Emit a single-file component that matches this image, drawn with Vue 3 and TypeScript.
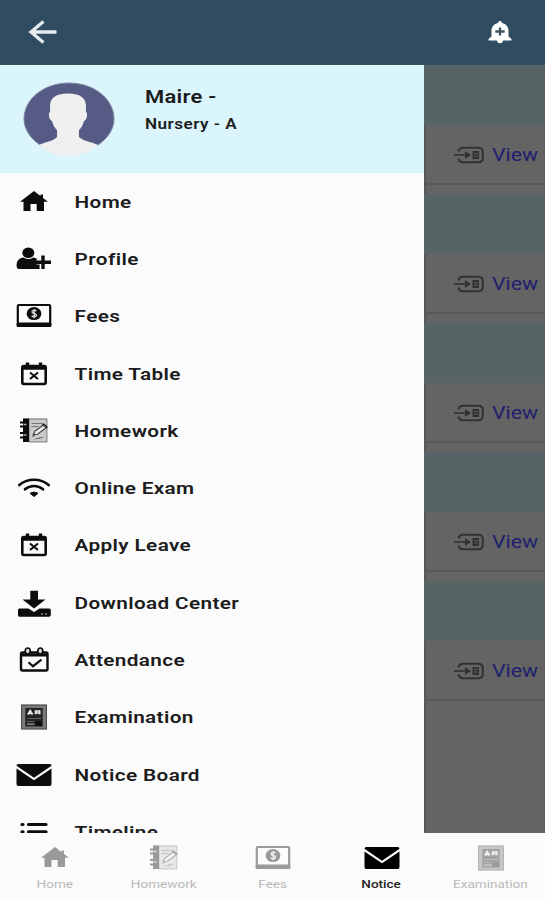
<script setup lang="ts">
interface Entry {
  label: string
  icon: string
}

const menu: Entry[] = [
  { label: 'Home', icon: 'home' },
  { label: 'Profile', icon: 'profile' },
  { label: 'Fees', icon: 'fees' },
  { label: 'Time Table', icon: 'calendar-x' },
  { label: 'Homework', icon: 'homework' },
  { label: 'Online Exam', icon: 'wifi' },
  { label: 'Apply Leave', icon: 'calendar-x' },
  { label: 'Download Center', icon: 'download' },
  { label: 'Attendance', icon: 'calendar-check' },
  { label: 'Examination', icon: 'exam' },
  { label: 'Notice Board', icon: 'mail' },
  { label: 'Timeline', icon: 'list' },
]

const tabs: Entry[] = [
  { label: 'Home', icon: 'home' },
  { label: 'Homework', icon: 'homework' },
  { label: 'Fees', icon: 'fees' },
  { label: 'Notice', icon: 'mail' },
  { label: 'Examination', icon: 'exam' },
]

const activeTab = 'Notice'
</script>

<template>
  <div class="screen">
    <svg class="sprite" aria-hidden="true">
      <symbol id="home" viewBox="0 0 36 30">
        <path d="M18 4 4 14.800h3.500V24h7v-7h6.200v7H28v-9.200h4L27 10.900V7.500h-2.500v1.500z" fill="currentColor" />
      </symbol>
      <symbol id="profile" viewBox="0 0 36 30">
        <ellipse cx="12.300" cy="8.800" rx="6" ry="5.300" fill="currentColor" />
        <path d="M.6 21c0-4.500 3-7.300 7-7.600 3 2 6.500 2 9.500 0 2 .2 3.500 1 4.500 2h-1.200v5.200h3.200V25H3C1.300 25 .6 23.500.6 21z" fill="currentColor" />
        <path d="M27 11.500V25M20 18.300h15" stroke="currentColor" stroke-width="3.400" />
      </symbol>
      <symbol id="fees" viewBox="0 0 36 30">
        <rect x="1.800" y="4" width="32.400" height="18.500" rx="1" fill="none" stroke="currentColor" stroke-width="2.200" />
        <path d="M.5 22h35v2.500q0 1.500-1.500 1.500H2q-1.500 0-1.500-1.500z" fill="currentColor" />
        <ellipse cx="18" cy="12.600" rx="7.400" ry="6.500" fill="currentColor" />
        <path d="M20.300 10.200c-1-1.400-4.300-1.100-4.300.7 0 2 4.500 1.200 4.500 3.400 0 1.900-3.500 2-4.800.5M18.200 8v9.300" fill="none" stroke="#ddd" stroke-width="1.400" />
      </symbol>
      <symbol id="calendar-x" viewBox="0 0 36 30">
        <rect x="6.300" y="7" width="23.400" height="18" rx="1.500" fill="none" stroke="currentColor" stroke-width="2.600" />
        <path d="M6 9h24M11.500 3.500v6M24.500 3.500v6" stroke="currentColor" stroke-width="3.400" />
        <path d="m14 13.500 8 6.500m0-6.500-8 6.500" stroke="currentColor" stroke-width="2" />
      </symbol>
      <symbol id="calendar-check" viewBox="0 0 36 30">
        <rect x="5" y="7.500" width="26.500" height="18" rx="1.500" fill="none" stroke="currentColor" stroke-width="2.400" />
        <path d="M5 8.500h26.500v3H5z" fill="currentColor" />
        <ellipse cx="11.700" cy="6" rx="2.500" ry="3" fill="#ddd" stroke="currentColor" stroke-width="1.700" />
        <ellipse cx="24.300" cy="6" rx="2.500" ry="3" fill="#ddd" stroke="currentColor" stroke-width="1.700" />
        <path d="m12.500 17.200 4.500 4 8.500-6.500" fill="none" stroke="currentColor" stroke-width="2.200" />
      </symbol>
      <symbol id="homework" viewBox="0 0 36 30">
        <path d="M7 2.500h24V26H7z" fill="currentColor" opacity=".2" />
        <path d="M7 2.500h6.200V26H7z" fill="currentColor" />
        <path d="M4 6.500h6M4 10.500h5M4 17h6M4 21.500h6" stroke="currentColor" stroke-width="2" />
        <path d="M7.500 8.500h3M7.500 19h3" stroke="#aaa" stroke-width="1.400" />
        <path d="M13 3h18v23H13M15.500 7.500h11M15.500 10.500h7" fill="none" stroke="currentColor" stroke-width="1" opacity=".45" />
        <path d="m17.500 18.500 1.500-3.500 9-6.500 3 2.700-9.500 7z" fill="#f4f4f4" stroke="currentColor" stroke-width="1.100" opacity=".75" />
        <path d="m25.500 8.500 2-1.400 4.200 3.600-2 1.500zM16 21l3-1-1.800-2zM16 23.500c4-.8 8 .5 12-3" fill="currentColor" opacity=".6" />
      </symbol>
      <symbol id="wifi" viewBox="0 0 36 30">
        <path d="M3.300 12c8-7 21.400-7 29.400 0M9 16.300c5.300-4.400 12.700-4.400 18 0" fill="none" stroke="currentColor" stroke-width="2.700" stroke-linecap="round" />
        <path d="M14 20.300q4-2.500 8 0l-4 3.200z" fill="currentColor" stroke="currentColor" stroke-linejoin="round" />
      </symbol>
      <symbol id="download" viewBox="0 0 36 30">
        <path d="M14.300 2.800h7.700v8.700h7.500L18 20.500 6.500 11.500h7.800z" fill="currentColor" />
        <path d="M3.300 20.500h9.200l5.500 3.600 5.500-3.600h9.700q1.600 0 1.600 1.600v5q0 1.600-1.600 1.600H3.300q-1.300 0-1.300-1.600v-5q0-1.600 1.300-1.600z" fill="currentColor" />
        <path d="M25 26h2m2 0h2" stroke="#888" stroke-width="1.500" />
      </symbol>
      <symbol id="exam" viewBox="0 0 36 30">
        <path d="M5 2.500h26v25H5z" fill="currentColor" opacity=".55" />
        <path d="M5.500 3h25v24h-25z" fill="none" stroke="currentColor" stroke-width="1" opacity=".45" />
        <path d="M9.300 6h17.400v18.500H9.300z" fill="currentColor" opacity=".8" />
        <path d="m11.800 12.500 2.400-4 2.400 4m-4-1h3.200M19.500 12.300V9h4.200v3.300M19.500 11h4" fill="none" stroke="#eee" stroke-width="1.600" />
        <path d="M11 16.500h14M11 19.500h7" stroke="#aaa" stroke-width=".7" opacity=".7" />
        <path d="M11 22.200h7.500" stroke="#aaa" stroke-width="1.600" opacity=".7" />
        <path d="M19.500 19.500h6.500V24h-6.500z" fill="currentColor" />
      </symbol>
      <symbol id="mail" viewBox="0 0 36 30">
        <path d="M2.200 4h31.600q1.700 0 1.700 1.800L18 17.800.5 5.800Q.5 4 2.200 4z" fill="currentColor" />
        <path d="M.5 8.500 18 20.300 35.500 8.500v15.700q0 1.800-1.800 1.800H2.300Q.5 26 .5 24.200z" fill="currentColor" />
      </symbol>
      <symbol id="list" viewBox="0 0 36 30">
        <path d="M6 7.500h1M6 14.800h1M6 22h1M12.500 7.500H30M12.500 14.800H30M12.500 22H30" stroke="currentColor" stroke-width="3.200" stroke-linecap="round" />
      </symbol>
    </svg>

    <header class="topbar">
      <svg class="back" viewBox="0 0 30 26">
        <path d="M28.500 13H3M15.500 2.500 3 13l12.500 10.500" fill="none" stroke="#e6ebee" stroke-width="3.300" />
      </svg>
      <svg class="bell" viewBox="0 0 24 24">
        <path d="M12 1q2 0 2 2c4.500 1 6.500 4 6.500 8v5.500l3 2.500v1.500H.5V19l3-2.500V11c0-4 2-7 6.500-8q0-2 2-2zM9 20.500h6q-.3 2.800-3 2.800t-3-2.800z" fill="#fff" />
        <path d="M12 7.500v8M7.300 11.500h9.400" stroke="#3c5261" stroke-width="2.300" />
      </svg>
    </header>

    <main class="body">
      <aside class="drawer">
        <section class="account">
          <svg class="avatar" viewBox="0 0 92 76">
            <path d="M46 1c25 0 45 16 45 36 0 10-6 19-16 26H17C7 56 1 47 1 37 1 17 21 1 46 1z" fill="#565b86" stroke="#8288a4" stroke-width="1" />
            <path d="M45 11.500c13 0 18.500 5 18 14l-.2 4c2.200 1 1.500 8.500-1.800 9.500-1 4-2.500 7-5 9v7c5 4.500 13 5 19 8-7 7-17 11-30 11s-22-4-29-11c6-3 14-3.500 18-8v-7c-2.500-2-4-5-5-9-3.300-1-4-8.500-1.800-9.500L27 25.500c-.5-9 5-14 18-14z" fill="#efefef" />
          </svg>
          <div class="identity">
            <span class="name">Maire -</span>
            <span class="group">Nursery - A</span>
          </div>
        </section>
        <nav class="menu">
          <a v-for="item in menu" :key="item.label" class="entry">
            <svg class="icon"><use :href="`#${item.icon}`" /></svg>
            <span class="entry-label">{{ item.label }}</span>
          </a>
        </nav>
      </aside>

      <section class="notices">
        <article v-for="n in 5" :key="n" class="card">
          <div class="card-head"></div>
          <div class="card-row">
            <svg class="enter" viewBox="0 0 30 18">
              <path d="M4.500 5.500C5 3 6.500 1.700 9 1.700h15q4.800 0 4.800 4.300v6q0 4.300-4.800 4.300H9c-2.500 0-4-1.300-4.500-3.800" fill="none" stroke="#303232" stroke-width="2" />
              <path d="M0 9h13" stroke="#303232" stroke-width="1.600" />
              <path d="m11 5 6 4-6 4zM18.500 5H25v8h-6.500z" fill="#303232" />
              <path d="M20 7.500h4M20 10h4" stroke="#686a68" stroke-width=".8" />
            </svg>
            <span class="view">View</span>
          </div>
        </article>
      </section>
    </main>

    <nav class="tabs">
      <a v-for="tab in tabs" :key="tab.label" class="tab" :class="{ active: tab.label === activeTab }">
        <svg class="icon"><use :href="`#${tab.icon}`" /></svg>
        <span class="tab-label">{{ tab.label }}</span>
      </a>
    </nav>
  </div>
</template>

<style>
body {
  margin: 0;
}
</style>

<style scoped>
.screen {
  display: flex;
  flex-direction: column;
  width: 545px;
  height: 900px;
  overflow: hidden;
  background: #fbfbfb;
  color: #1c1c1c;
  font-family: Roboto, 'Liberation Sans', sans-serif;
}

.sprite {
  display: none;
}

.topbar {
  display: flex;
  flex: none;
  align-items: center;
  justify-content: space-between;
  box-sizing: border-box;
  height: 65px;
  padding: 0 33px 0 28px;
  background: #2f4c61;
  border-bottom: 1px solid #35505f;
}

.back {
  width: 30px;
  height: 26px;
}

.bell {
  width: 24px;
  height: 24px;
}

.body {
  display: flex;
  flex: none;
  height: 768px;
  overflow: hidden;
}

.drawer {
  flex: none;
  width: 424px;
  background: #fbfbfb;
}

.account {
  display: flex;
  box-sizing: border-box;
  height: 108px;
  padding: 17px 0 0 23px;
  background: #dbf5fd;
}

.avatar {
  flex: none;
  width: 92px;
  height: 76px;
}

.identity {
  display: flex;
  flex-direction: column;
  gap: 5px;
  padding: 4px 0 0 30px;
}

.name,
.group,
.entry-label,
.view {
  transform: scaleX(1.22);
  transform-origin: left center;
  white-space: nowrap;
}

.name {
  font-size: 18px;
  font-weight: 600;
  line-height: 22px;
  letter-spacing: 0.2px;
}

.group {
  font-size: 14px;
  font-weight: 600;
  line-height: 22px;
  letter-spacing: 0.4px;
}

.entry {
  display: flex;
  align-items: center;
  height: 57.3px;
  padding-left: 16px;
}

.icon {
  flex: none;
  width: 36px;
  height: 30px;
  color: #0c0c0c;
}

.entry-label {
  padding-left: 18.500px;
  font-size: 17px;
  font-weight: 600;
  letter-spacing: 0.3px;
}

.notices {
  flex: 1;
  background: #646464;
  box-shadow: inset 3px 0 3px -2px #4d4d4d;
}

.card {
  height: 120px;
  margin-bottom: 8.9px;
  border-bottom: 2px solid #575959;
  box-sizing: border-box;
}

.card-head {
  height: 60px;
  background: #566465;
}

.card-row {
  display: flex;
  align-items: center;
  gap: 8px;
  height: 60px;
  padding-left: 30px;
}

.enter {
  width: 30px;
  height: 18px;
}

.view {
  color: #20206d;
  font-size: 17.500px;
  letter-spacing: 0;
}

.tabs {
  display: flex;
  flex: 1;
  background: #fbfbfb;
}

.tab {
  display: flex;
  flex: 1;
  flex-direction: column;
  align-items: center;
  padding-top: 10px;
}

.tab .icon {
  opacity: 0.4;
}

.tab-label {
  margin-top: 5px;
  color: #b9b9b9;
  font-size: 11px;
  line-height: 14px;
  transform: scaleX(1.23);
}

.tab.active .icon {
  opacity: 1;
  color: #000;
}

.tab.active .tab-label {
  color: #222;
  font-weight: 500;
}
</style>
